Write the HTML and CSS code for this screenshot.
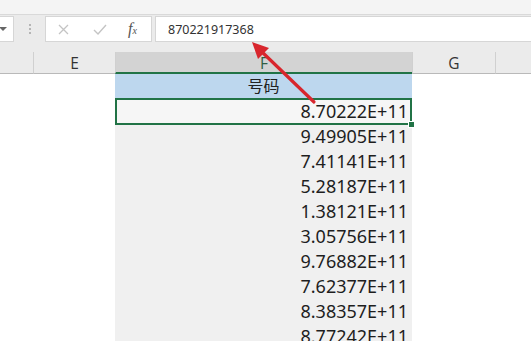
FILE: index.html
```html
<!DOCTYPE html>
<html lang="zh">
<head>
    <meta charset="UTF-8">
    <meta name="viewport" content="width=device-width, initial-scale=1.0">
    <title>号码</title>
    <link rel="stylesheet" href="styles.css">
</head>
<body>
    <div class="ribbon-edge"></div>

    <!-- 编辑栏 -->
    <div class="formula-bar">
        <div class="name-box">
            <svg width="8" height="5" viewBox="0 0 8 5"><path d="M0 0 L8 0 L4 4 Z" fill="#666"/></svg>
        </div>
        <div class="grip"><span></span><span></span><span></span></div>
        <div class="fx-buttons">
            <svg class="btn-icon" width="11" height="11" viewBox="0 0 11 11"><path d="M1 1 L10 10 M10 1 L1 10" stroke="#c4c4c4" stroke-width="1.3" fill="none"/></svg>
            <svg class="btn-icon" width="14" height="11" viewBox="0 0 14 11"><path d="M1 6 L5 10 L13 1" stroke="#c4c4c4" stroke-width="1.4" fill="none"/></svg>
            <span class="fx">f<sub>x</sub></span>
        </div>
        <div class="formula-input">870221917368</div>
    </div>

    <!-- 工作表 -->
    <div class="sheet">
        <div class="col-head"></div>
        <div class="col-head">E</div>
        <div class="col-head active">F</div>
        <div class="col-head">G</div>
        <div class="col-head last"></div>

        <div class="cell"></div>
        <div class="cell"></div>
        <div class="cell title">号码</div>
        <div class="cell"></div>
        <div class="cell"></div>
    </div>
    <div class="sheet" id="rows"></div>

    <!-- 红色箭头 -->
    <svg class="arrow" width="531" height="341" viewBox="0 0 531 341">
        <line x1="314" y1="102" x2="261" y2="51" stroke="#d8262d" stroke-width="3.2" stroke-linecap="round"/>
        <path d="M252 42 L269 48 L258 59 Z" fill="#d8262d"/>
    </svg>

    <script>
        const numeros = [
            "8.70222E+11", "9.49905E+11", "7.41141E+11", "5.28187E+11", "1.38121E+11",
            "3.05756E+11", "9.76882E+11", "7.62377E+11", "8.38357E+11", "8.77242E+11"
        ];

        const rows = document.getElementById("rows");
        numeros.forEach((n, i) => {
            rows.innerHTML += `
                <div class="cell"></div>
                <div class="cell"></div>
                <div class="cell num${i === 0 ? " selected" : ""}">${n}</div>
                <div class="cell"></div>
                <div class="cell"></div>
            `;
        });
    </script>
</body>
</html>
```

FILE: styles.css
```css
body {
    margin: 0;
    padding: 0;
    width: 531px;
    height: 341px;
    overflow: hidden;
    position: relative;
    background-color: #fff;
    font-family: "Noto Sans", "Noto Sans CJK SC", sans-serif;
    color: #222;
}
.ribbon-edge {
    height: 14px;
    background-color: #f4f4f4;
    border-bottom: 1px solid #d9d9d9;
}
.formula-bar {
    display: flex;
    align-items: stretch;
    height: 26px;
    padding: 1px 0 10px;
    background-color: #ebebeb;
}
.name-box {
    width: 13px;
    background-color: #fff;
    border: 1px solid #d6d6d6;
    border-left: none;
    display: flex;
    align-items: center;
}
.name-box svg {
    margin-left: -1px;
}
.grip {
    width: 31px;
    display: flex;
    flex-direction: column;
    align-items: center;
    justify-content: center;
    gap: 2px;
}
.grip span {
    width: 2px;
    height: 2px;
    background-color: #b5b5b5;
}
.fx-buttons {
    width: 107px;
    background-color: #fff;
    border: 1px solid #d6d6d6;
    display: flex;
    align-items: center;
    padding-left: 12px;
    box-sizing: border-box;
}
.btn-icon {
    margin-right: 24px;
}
.btn-icon + .btn-icon {
    margin-right: 21px;
}
.fx {
    font-family: "Liberation Serif", serif;
    font-style: italic;
    font-size: 16px;
    color: #555;
}
.fx sub {
    font-size: 10px;
    vertical-align: 0;
}
.formula-input {
    flex: 1;
    margin-left: 3px;
    background-color: #fff;
    border: 1px solid #d6d6d6;
    border-right: none;
    padding-left: 12px;
    font-size: 12.5px;
    line-height: 26px;
    color: #333;
}
.sheet {
    display: grid;
    grid-template-columns: 33px 82px 297px 83px 1fr;
}
.col-head {
    height: 21px;
    background-color: #ebebeb;
    border-left: 1px solid #d0d0d0;
    border-bottom: 1px solid #b9b9b9;
    text-align: center;
    font-family: "Open Sans", sans-serif;
    font-size: 15.5px;
    line-height: 23px;
    color: #333;
}
.col-head:first-child {
    border-left: none;
}
.col-head.active {
    background-color: #d3d3d3;
    border-bottom: 2px solid #217346;
    height: 20px;
    color: #2f5e45;
}
.cell {
    height: 25px;
}
.title {
    height: 24px;
    background-color: #bdd7ee;
    text-align: center;
    font-size: 16px;
    line-height: 24px;
}
.num {
    background-color: #f0f0f0;
    text-align: right;
    padding-right: 4px;
    font-size: 18px;
    line-height: 25px;
    color: #1e1e1e;
}
.num.selected {
    position: relative;
    background-color: #f6f6f6;
    box-shadow: inset 0 0 0 2px #217346;
    margin-top: -1px;
    height: 27px;
    line-height: 27px;
    margin-bottom: -1px;
}
.num.selected::after {
    content: "";
    position: absolute;
    right: -3px;
    bottom: -3px;
    width: 5px;
    height: 5px;
    background-color: #217346;
    border: 1px solid #fff;
}
.arrow {
    position: absolute;
    top: 0;
    left: 0;
}
```
